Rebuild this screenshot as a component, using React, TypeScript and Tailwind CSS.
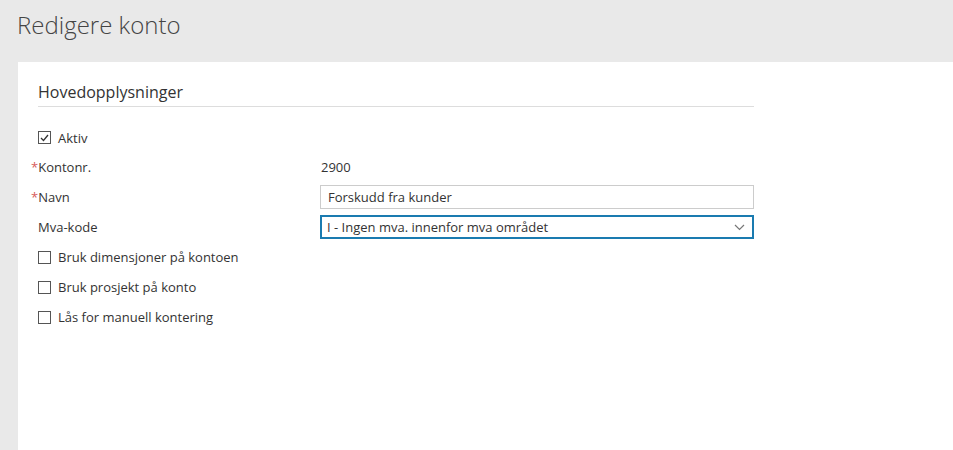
export default function App() {
  const font = { fontFamily: "'Open Sans', 'Segoe UI', sans-serif" };
  return (
    <div className="w-[953px] h-[450px] overflow-hidden bg-[#e9e9e9] text-[#333]" style={font}>
      <h1 className="h-[62px] pl-[17px] pt-[7px] text-[24px] font-light text-[#444] leading-[36px]">
        Redigere konto
      </h1>
      <div className="ml-[18px] h-[388px] bg-white pl-[20px] pt-[19px]">
        <div className="w-[716px]">
          <h2 className="text-[16px] leading-[22px] pb-[3px] border-b border-[#ddd] text-[#333]">
            Hovedopplysninger
          </h2>
          <div className="mt-[17px] text-[13px] leading-[18px]">
            <label className="flex items-center h-[30px] -mt-[2px] pt-[1px]">
              <Box checked />
              <span className="ml-[7px]">Aktiv</span>
            </label>
            <div className="flex items-center h-[30px]">
              <span className="w-[282px] -ml-[7px]">
                <span className="text-[#d65c5c]">*</span>Kontonr.
              </span>
              <span className="ml-[8px]">2900</span>
            </div>
            <div className="flex items-center h-[30px]">
              <span className="w-[282px] -ml-[7px]">
                <span className="text-[#d65c5c]">*</span>Navn
              </span>
              <div className="ml-[7px] flex-1 h-[24px] border border-[#ccc] flex items-center px-[7px]">
                Forskudd fra kunder
              </div>
            </div>
            <div className="flex items-center h-[30px]">
              <span className="w-[282px]">Mva-kode</span>
              <div className="flex-1 h-[24px] border-2 border-[#1a7bb0] flex items-center pl-[5px] pr-[7px] justify-between">
                <span>I - Ingen mva. innenfor mva området</span>
                <svg width="11" height="7" viewBox="0 0 11 7" fill="none" stroke="#777" strokeWidth="1.2">
                  <path d="M1 1l4.5 4.5L10 1" />
                </svg>
              </div>
            </div>
            <label className="flex items-center h-[30px]">
              <Box />
              <span className="ml-[7px]">Bruk dimensjoner på kontoen</span>
            </label>
            <label className="flex items-center h-[30px]">
              <Box />
              <span className="ml-[7px]">Bruk prosjekt på konto</span>
            </label>
            <label className="flex items-center h-[30px]">
              <Box />
              <span className="ml-[7px]">Lås for manuell kontering</span>
            </label>
          </div>
        </div>
      </div>
    </div>
  );
}

function Box({ checked = false }: { checked?: boolean }) {
  return (
    <span className="w-[13px] h-[13px] border border-[#555] bg-white flex items-center justify-center">
      {checked && (
        <svg width="9" height="8" viewBox="0 0 9 8" fill="none" stroke="#333" strokeWidth="1.3">
          <path d="M1 4l2.5 2.5L8 1" />
        </svg>
      )}
    </span>
  );
}
